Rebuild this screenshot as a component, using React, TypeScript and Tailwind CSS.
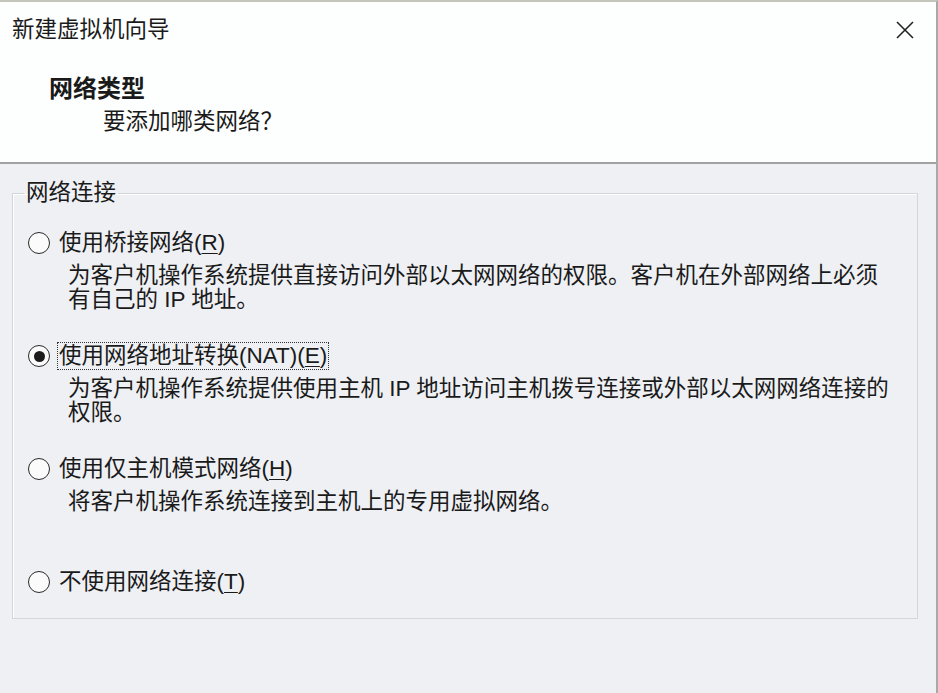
import React, { useState } from 'react';

type NetOption = {
  id: string;
  label: string;
  key: string;
  desc: string[];
};

const OPTIONS: NetOption[] = [
  {
    id: 'bridged',
    label: '使用桥接网络',
    key: 'R',
    desc: ['为客户机操作系统提供直接访问外部以太网网络的权限。客户机在外部网络上必须', '有自己的 IP 地址。'],
  },
  {
    id: 'nat',
    label: '使用网络地址转换(NAT)',
    key: 'E',
    desc: ['为客户机操作系统提供使用主机 IP 地址访问主机拨号连接或外部以太网网络连接的', '权限。'],
  },
  {
    id: 'hostonly',
    label: '使用仅主机模式网络',
    key: 'H',
    desc: ['将客户机操作系统连接到主机上的专用虚拟网络。'],
  },
  {
    id: 'none',
    label: '不使用网络连接',
    key: 'T',
    desc: [],
  },
];

const Radio = ({ checked }: { checked: boolean }) => (
  <span className="w-[22px] h-[22px] rounded-full border-[1.5px] border-[#2a2a2a] bg-[#fbfbfb] flex items-center justify-center shrink-0">
    {checked && <span className="w-[11px] h-[11px] rounded-full bg-[#1c1c1c]" />}
  </span>
);

export default function App() {
  const [selected, setSelected] = useState('nat');

  return (
    <div
      className="w-[938px] h-[693px] bg-[#eef0f4] border-t-2 border-r-2 border-t-[#c4c6bc] border-r-[#a9aaa6] flex flex-col text-[#1a1a1a] overflow-hidden"
      style={{ fontFamily: '"Liberation Sans", "Noto Sans CJK SC", sans-serif' }}
    >
      {/* 头部 */}
      <div className="h-[162px] bg-[#fdfefe] border-b-2 border-b-[#a2a2a2] shrink-0 flex flex-col">
        <div className="flex items-center justify-between pl-[12px] pr-[20px] pt-[12px] h-[44px]">
          <span className="text-[22.5px] leading-[30px]">新建虚拟机向导</span>
          <button className="w-[22px] h-[22px] flex items-center justify-center">
            <svg width="20" height="20" viewBox="0 0 20 20" fill="none" stroke="#222" strokeWidth="1.6">
              <path d="M2 2 L18 18 M18 2 L2 18" />
            </svg>
          </button>
        </div>
        <div className="pl-[49px] pt-[28px] text-[24px] leading-[30px] font-bold">网络类型</div>
        <div className="pl-[103px] pt-[3px] text-[22.5px] leading-[30px]">要添加哪类网络？</div>
      </div>

      {/* 主体 */}
      <div className="pl-[12px] pt-[17px]">
        <fieldset className="w-[906px] m-0 border border-[#d2d5d9] pl-[15px] pr-0 pt-[25px] pb-[23px] shadow-[inset_1px_1px_0_#ffffff]">
          <legend className="-ml-[4px] px-[2px] text-[22.5px] leading-[24px]">网络连接</legend>
          {OPTIONS.map((o, i) => {
            const checked = selected === o.id;
            const last = i === OPTIONS.length - 1;
            return (
              <div key={o.id} className={last ? '' : 'h-[113px]'}>
                <label className="flex items-center h-[26px] cursor-default" onClick={() => setSelected(o.id)}>
                  <Radio checked={checked} />
                  <span
                    className={`ml-[7px] px-[1px] text-[22.5px] leading-[26px] border border-dotted ${checked ? 'border-[#333]' : 'border-transparent'}`}
                  >
                    {o.label}(<u className="underline-offset-[3px] decoration-1">{o.key}</u>)
                  </span>
                </label>
                {o.desc.length > 0 && (
                  <div className="pl-[40px] mt-[8px] text-[22.5px] leading-[24px]">
                    {o.desc.map((d) => (
                      <div key={d}>{d}</div>
                    ))}
                  </div>
                )}
              </div>
            );
          })}
        </fieldset>
      </div>
    </div>
  );
}
